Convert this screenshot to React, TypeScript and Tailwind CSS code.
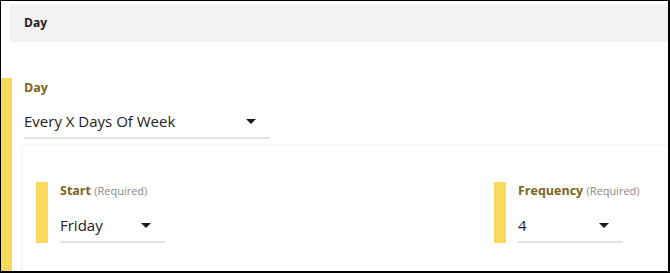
import React from "react";

const Caret: React.FC = () => (
  <svg width="10" height="5" viewBox="0 0 10 5" className="shrink-0">
    <path d="M0 0 L10 0 L5 5 Z" fill="#1a1a1a" />
  </svg>
);

type FieldProps = {
  label: string;
  value: string;
};

const RequiredField: React.FC<FieldProps> = ({ label, value }) => (
  <div className="flex h-[61px] shrink-0">
    <div className="w-[12px] bg-[#f9d95c]" />
    <div className="ml-[12px] flex w-[105px] flex-col">
      <div className="h-[17px] whitespace-nowrap text-[12.5px] leading-[17px]">
        <span className="font-bold text-[#7a6420]">{label}</span>{" "}
        <span className="text-[11px] text-[#8a8a8a]">(Required)</span>
      </div>
      <div className="mt-auto flex h-[36px] items-center justify-between border-b-2 border-[#e3e3e3] pr-[14px] pt-[3px]">
        <span className="text-[15px] text-[#222]">{value}</span>
        <Caret />
      </div>
    </div>
  </div>
);

export default function App() {
  return (
    <div
      className="h-[273px] w-[670px] overflow-hidden border-b-2 border-l border-r-2 border-t border-black bg-white"
      style={{ fontFamily: '"Open Sans", "Noto Sans", sans-serif' }}
    >
      {/* Section header */}
      <div className="ml-[9px] mt-[3px] flex h-[38px] items-center bg-[#f3f1f2] pl-[14px]">
        <span className="text-[12px] font-bold text-[#1f1f1f]">Day</span>
      </div>

      {/* Day picker */}
      <div className="mt-[36px] flex h-[200px]">
        <div className="w-[11px] shrink-0 bg-[#f9d95c]" />
        <div className="flex flex-1 flex-col">
          <div className="ml-[12px] mt-[1px] h-[18px] text-[12.5px] font-bold leading-[18px] text-[#7a6420]">
            Day
          </div>
          <div className="ml-[12px] mt-[8px] flex h-[34px] w-[246px] items-center justify-between border-b-2 border-[#e3e3e3] pr-[14px]">
            <span className="text-[15px] text-[#222]">Every X Days Of Week</span>
            <Caret />
          </div>

          {/* Inner card */}
          <div className="ml-[11px] mt-[7px] flex-1 bg-white pl-[13px] pt-[36px] shadow-[0_0_4px_rgba(0,0,0,0.12)]">
            <div className="flex gap-[329px]">
              <RequiredField label="Start" value="Friday" />
              <RequiredField label="Frequency" value="4" />
            </div>
          </div>
        </div>
      </div>
    </div>
  );
}
